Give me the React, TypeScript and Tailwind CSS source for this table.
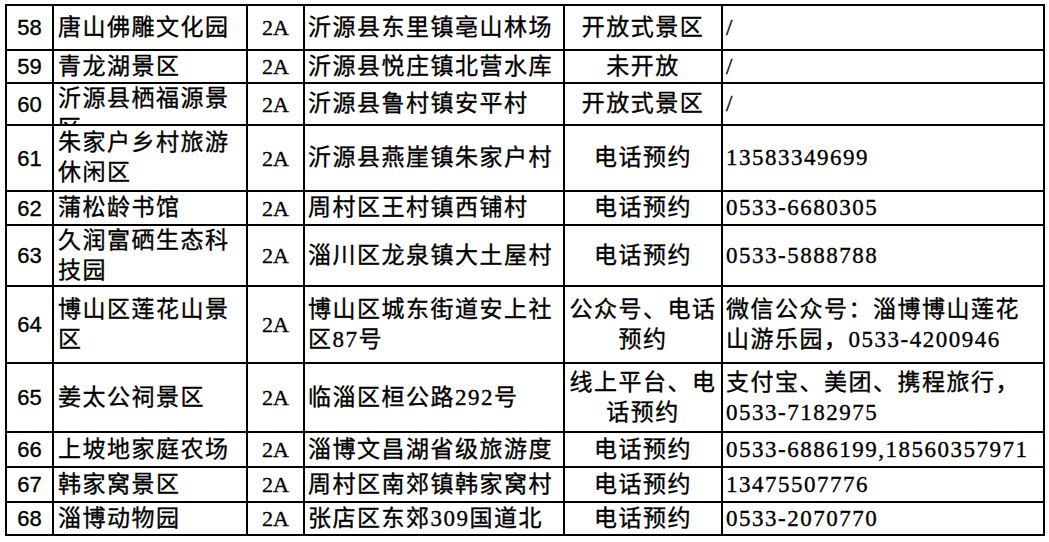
const rows = [
  ['58', '唐山佛雕文化园', '2A', '沂源县东里镇亳山林场', '开放式景区', '/'],
  ['59', '青龙湖景区', '2A', '沂源县悦庄镇北营水库', '未开放', '/'],
  ['60', '沂源县栖福源景区', '2A', '沂源县鲁村镇安平村', '开放式景区', '/'],
  ['61', '朱家户乡村旅游休闲区', '2A', '沂源县燕崖镇朱家户村', '电话预约', '13583349699'],
  ['62', '蒲松龄书馆', '2A', '周村区王村镇西铺村', '电话预约', '0533-6680305'],
  ['63', '久润富硒生态科技园', '2A', '淄川区龙泉镇大土屋村', '电话预约', '0533-5888788'],
  ['64', '博山区莲花山景区', '2A', '博山区城东街道安上社区87号', '公众号、电话预约', '微信公众号：淄博博山莲花山游乐园，0533-4200946'],
  ['65', '姜太公祠景区', '2A', '临淄区桓公路292号', '线上平台、电话预约', '支付宝、美团、携程旅行，0533-7182975'],
  ['66', '上坡地家庭农场', '2A', '淄博文昌湖省级旅游度', '电话预约', '0533-6886199,18560357971'],
  ['67', '韩家窝景区', '2A', '周村区南郊镇韩家窝村', '电话预约', '13475507776'],
  ['68', '淄博动物园', '2A', '张店区东郊309国道北', '电话预约', '0533-2070770'],
];

const cjk = "font-['Liberation_Serif','Noto_Sans_CJK_SC',serif] text-[23px] tracking-[1.5px] leading-[30px]";

export default function App() {
  return (
    <div className="min-h-screen bg-white pl-[5px] pt-[4px] text-black">
      <div className="inline-grid grid-cols-[45px_192px_55px_258px_156px_320px] grid-rows-[43px_31px_40px_64px_32px_59px_75px_67px_33px_33px_31px] gap-[2px] bg-black p-[2px] [-webkit-text-stroke:0.35px_black]">
        {rows.map((r) => {
          // row 60's name overflows the cell, so it sits at the top and gets cut
          const nameTop = r[0] === '60';
          return [
            <div key={r[0] + 'a'} className="flex items-center justify-center overflow-hidden bg-white font-['Liberation_Sans',sans-serif] text-[22px]">
              {r[0]}
            </div>,
            <div key={r[0] + 'b'} className={`flex overflow-hidden bg-white pl-[4px] ${nameTop ? 'items-start' : 'items-center'}`}>
              <span className={cjk}>{r[1]}</span>
            </div>,
            <div key={r[0] + 'c'} className="flex items-center justify-center overflow-hidden bg-white font-['Liberation_Serif',serif] text-[22px]">
              {r[2]}
            </div>,
            <div key={r[0] + 'd'} className="flex items-center overflow-hidden bg-white pl-[3px]">
              <span className={cjk}>{r[3]}</span>
            </div>,
            <div key={r[0] + 'e'} className="flex items-center justify-center overflow-hidden bg-white text-center">
              <span className={cjk}>{r[4]}</span>
            </div>,
            <div key={r[0] + 'f'} className="flex items-center overflow-hidden bg-white pl-[3px] pr-[4px]">
              <span className={cjk}>{r[5]}</span>
            </div>,
          ];
        })}
      </div>
    </div>
  );
}
